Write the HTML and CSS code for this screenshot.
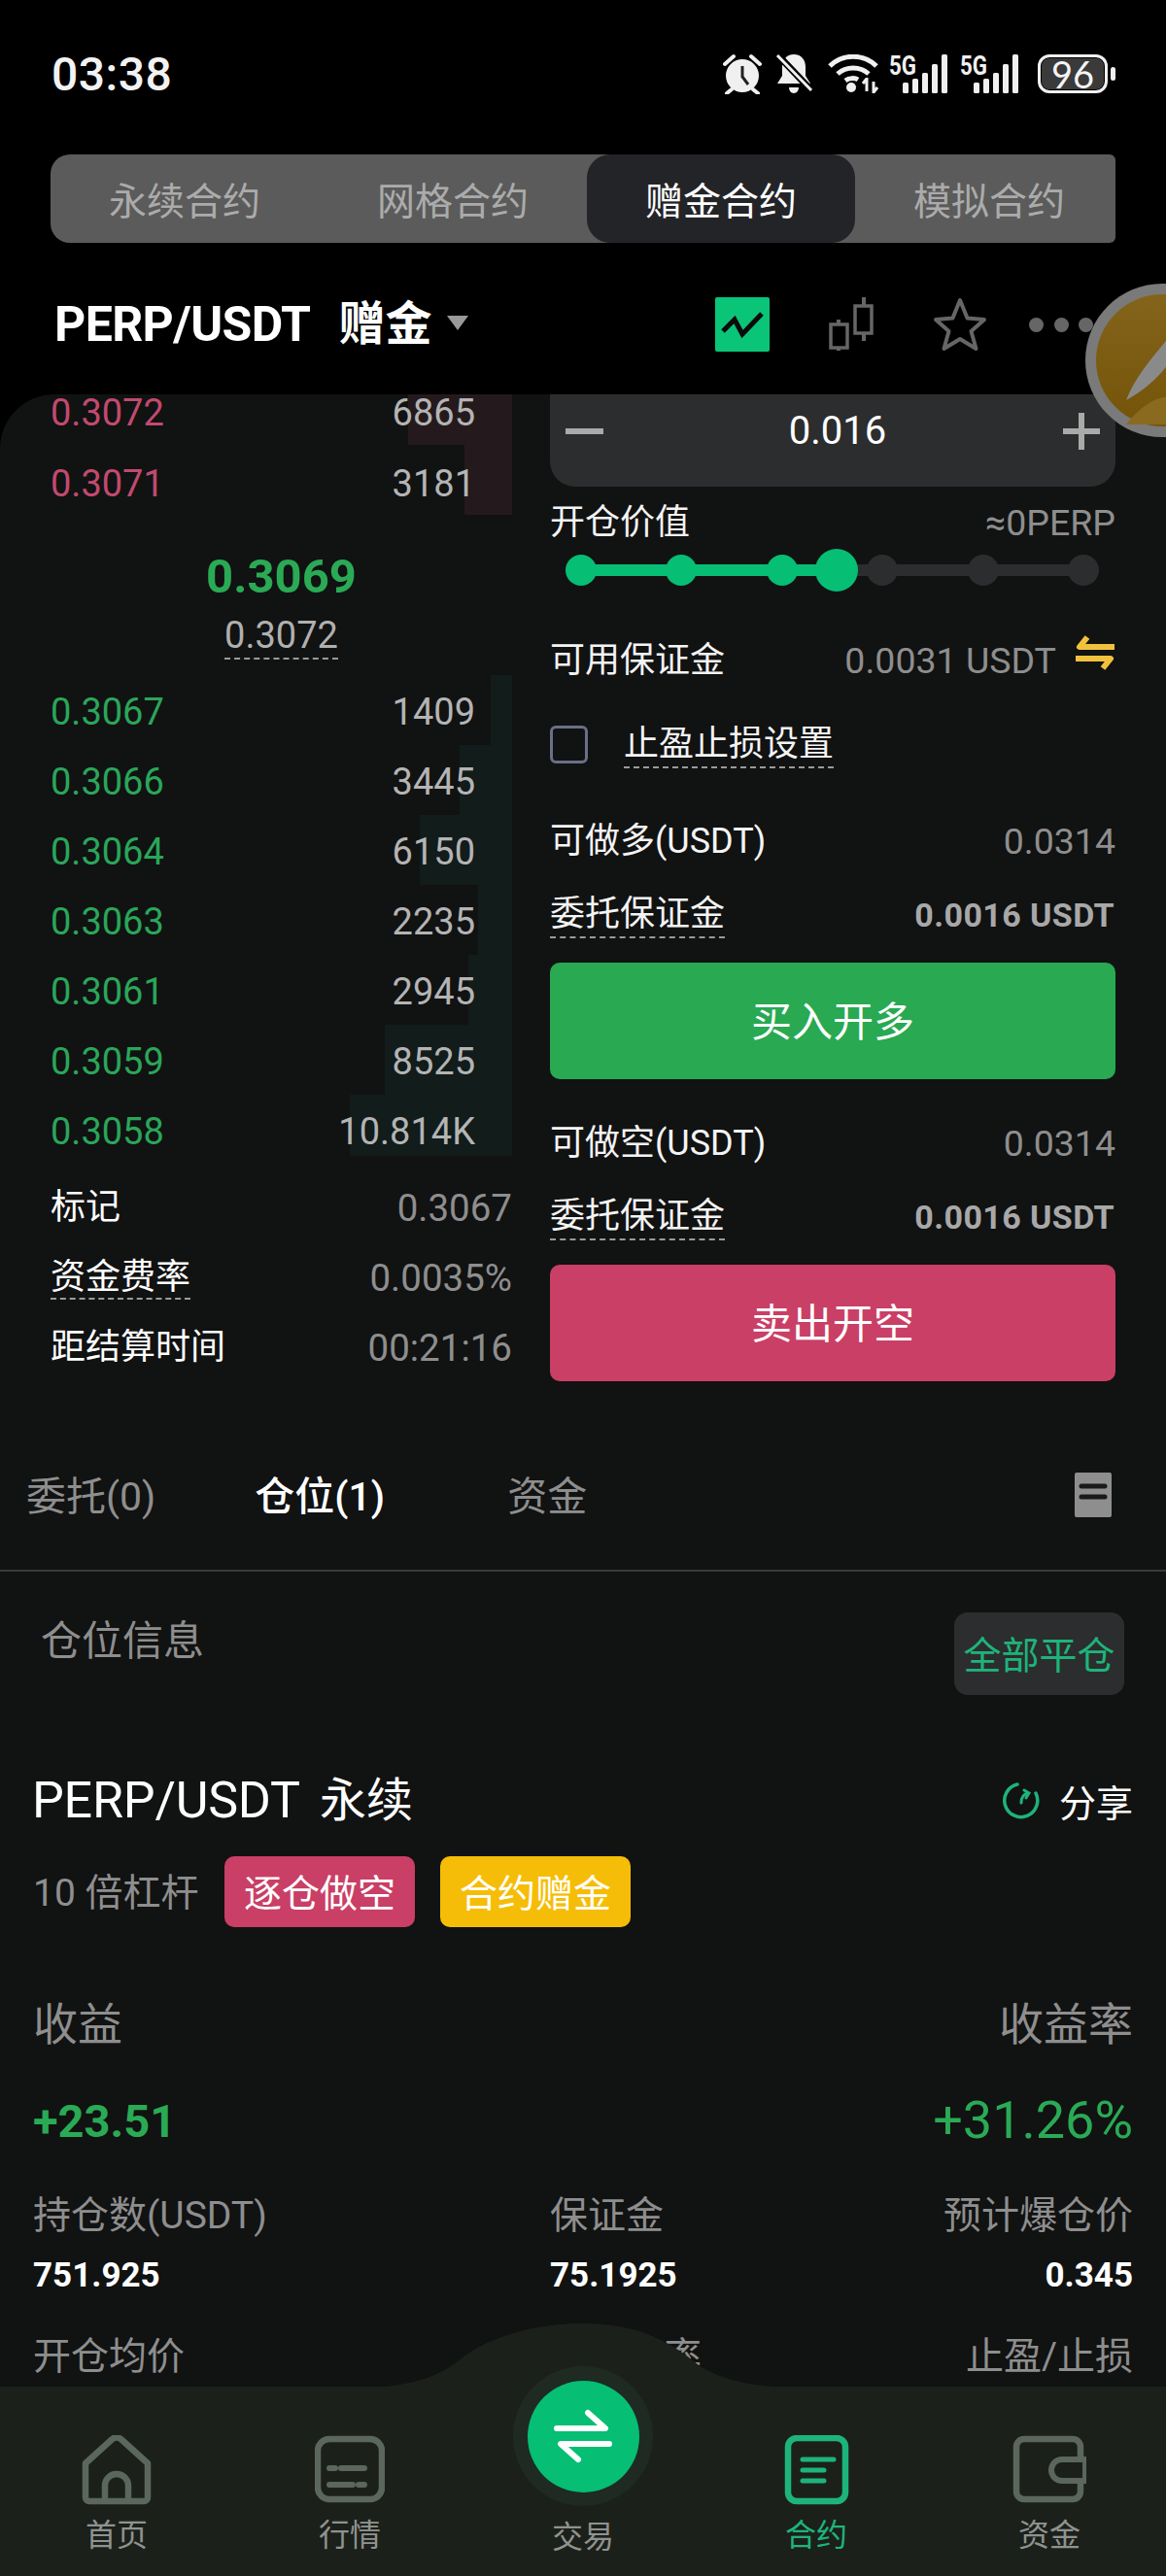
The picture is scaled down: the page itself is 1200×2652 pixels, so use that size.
FILE: index.html
```html
<!DOCTYPE html>
<html lang="zh-CN">
<head>
<meta charset="utf-8">
<title>赠金合约</title>
<link rel="stylesheet" href="styles.css">
</head>
<body>
<div class="page">
  <header class="status">
    <span class="time">03:38</span>
    <div class="status-icons">
      <svg class="ic-alarm" width="40" height="42" viewBox="0 0 40 42"><circle cx="20" cy="23" r="17" fill="#f0f0f0"/><path d="M20 13v11l6 8" fill="none" stroke="#222" stroke-width="3"/><path d="M2 11 11 3M38 11 29 3M9 37l-5 4M31 37l5 4" stroke="#f0f0f0" stroke-width="4" stroke-linecap="round"/></svg>
      <svg class="ic-bell" width="40" height="44" viewBox="0 0 40 44"><path d="M20 2c8 0 12 6 12 13v9l5 8H3l5-8v-9c0-7 4-13 12-13zM15 36h10c0 3-2 6-5 6s-5-3-5-6z" fill="#f0f0f0"/><path d="M2 1l36 38" stroke="#000" stroke-width="7"/><path d="M3 3l35 36" stroke="#f0f0f0" stroke-width="3"/></svg>
      <svg class="ic-wifi" width="52" height="40" viewBox="0 0 52 40"><path d="M2 12C15-1 37-1 50 12M10 20c9-8 23-8 32 0M18 27c4-3 10-3 13-1" fill="none" stroke="#f0f0f0" stroke-width="5"/><circle cx="24" cy="34" r="5" fill="#f0f0f0"/><path d="M40 24v14M47 28v12M36 30l4-5M51 34l-4 5" stroke="#f0f0f0" stroke-width="3" fill="none"/></svg>
      <svg class="ic-sig" width="62" height="54" viewBox="0 -6 62 54"><text class="five-g" x="0" y="22" textLength="28" lengthAdjust="spacingAndGlyphs">5G</text><rect x="14" y="30" width="6" height="11" rx="1.5"/><rect x="24" y="26" width="6" height="15" rx="1.5"/><rect x="34" y="20" width="6" height="21" rx="1.5"/><rect x="44" y="11" width="6" height="30" rx="1.5"/><rect x="54" y="1" width="6" height="40" rx="1.5"/></svg>
      <svg class="ic-sig" width="62" height="54" viewBox="0 -6 62 54"><text class="five-g" x="0" y="22" textLength="28" lengthAdjust="spacingAndGlyphs">5G</text><rect x="14" y="30" width="6" height="11" rx="1.5"/><rect x="24" y="26" width="6" height="15" rx="1.5"/><rect x="34" y="20" width="6" height="21" rx="1.5"/><rect x="44" y="11" width="6" height="30" rx="1.5"/><rect x="54" y="1" width="6" height="40" rx="1.5"/></svg>
      <div class="battery"><span class="batt-body">96</span><i class="batt-nub"></i></div>
    </div>
  </header>

  <nav class="mode-tabs">
    <span class="mode-tab">永续合约</span>
    <span class="mode-tab">网格合约</span>
    <span class="mode-tab active">赠金合约</span>
    <span class="mode-tab">模拟合约</span>
  </nav>

  <div class="symbol-row">
    <h1 class="symbol">PERP/USDT<span class="symbol-tag">赠金</span></h1>
    <i class="caret"></i>
    <div class="symbol-tools">
      <svg class="tool-line" width="56" height="56" viewBox="0 0 56 56"><rect width="56" height="56" rx="2" fill="#0ac578"/><path d="M8 35l12-12 8 15 20-21" fill="none" stroke="#0b0b0b" stroke-width="5"/></svg>
      <svg class="tool-candle" width="46" height="56" viewBox="0 0 46 56"><path d="M10 23v32M36 0v45" stroke="#666" stroke-width="4"/><rect x="2" y="28" width="17" height="24" fill="#000" stroke="#666" stroke-width="3.5"/><rect x="27" y="9" width="17" height="28" fill="#000" stroke="#666" stroke-width="3.5"/></svg>
      <svg class="tool-star" width="56" height="56" viewBox="0 0 56 56"><path d="M28 3l7.5 18.5L53 23 39.5 35l5 18L28 43 11.500 53l5-18L3 23l17.500-1.500z" fill="none" stroke="#666" stroke-width="4" stroke-linejoin="round"/></svg>
      <div class="tool-dots"><i></i><i></i><i></i></div>
    </div>
  </div>

  <main class="sheet">
    <section class="trade">
      <div class="book">
        <div class="asks">
          <div class="level level-top"><i class="depth depth-ask" style="width:107px"></i><span class="px ask">0.3072</span><span class="qty">6865</span></div>
          <div class="level"><i class="depth depth-ask" style="width:49px"></i><span class="px ask">0.3071</span><span class="qty">3181</span></div>
        </div>
        <div class="mid">
          <div class="mid-price">0.3069</div>
          <div class="mid-mark"><span class="dashed">0.3072</span></div>
        </div>
        <div class="bids">
          <div class="level"><i class="depth depth-bid" style="width:22px"></i><span class="px bid">0.3067</span><span class="qty">1409</span></div>
          <div class="level"><i class="depth depth-bid" style="width:54px"></i><span class="px bid">0.3066</span><span class="qty">3445</span></div>
          <div class="level"><i class="depth depth-bid" style="width:95px"></i><span class="px bid">0.3064</span><span class="qty">6150</span></div>
          <div class="level"><i class="depth depth-bid" style="width:35px"></i><span class="px bid">0.3063</span><span class="qty">2235</span></div>
          <div class="level"><i class="depth depth-bid" style="width:45px"></i><span class="px bid">0.3061</span><span class="qty">2945</span></div>
          <div class="level"><i class="depth depth-bid" style="width:131px"></i><span class="px bid">0.3059</span><span class="qty">8525</span></div>
          <div class="level"><i class="depth depth-bid" style="width:167px"></i><span class="px bid">0.3058</span><span class="qty">10.814K</span></div>
        </div>
        <dl class="stats">
          <div class="stat"><dt>标记</dt><dd>0.3067</dd></div>
          <div class="stat"><dt><span class="dashed">资金费率</span></dt><dd>0.0035%</dd></div>
          <div class="stat"><dt>距结算时间</dt><dd>00:21:16</dd></div>
        </dl>
      </div>

      <div class="order">
        <div class="stepper">
          <svg width="40" height="40" viewBox="0 0 40 40"><rect y="17" width="39" height="6" fill="#aaa"/></svg>
          <span class="step-val">0.016</span>
          <svg width="38" height="38" viewBox="0 0 38 38"><path d="M19 0v38M0 19h38" stroke="#aaa" stroke-width="6"/></svg>
        </div>
        <div class="line line-value"><span class="lbl">开仓价值</span><span class="val">≈0PERP</span></div>
        <div class="slider">
          <i class="rail"></i><i class="rail-on"></i>
          <i class="knot on"></i><i class="knot on"></i><i class="knot on"></i><i class="knot"></i><i class="knot"></i><i class="knot"></i>
          <i class="thumb"></i>
        </div>
        <div class="line line-avail">
          <span class="lbl">可用保证金</span>
          <span class="avail-val"><span class="val">0.0031 USDT</span>
            <svg class="swap" width="42" height="36" viewBox="0 0 42 36"><path d="M13 2 5 12h36M29 34l8-10H1" fill="none" stroke="#f0c23c" stroke-width="6" stroke-linejoin="round"/></svg>
          </span>
        </div>
        <div class="line line-check"><i class="check"></i><span class="lbl dashed">止盈止损设置</span></div>
        <div class="line line-long"><span class="lbl">可做多(USDT)</span><span class="val">0.0314</span></div>
        <div class="line line-margin"><span class="lbl dashed">委托保证金</span><span class="val-b">0.0016 USDT</span></div>
        <button class="cta cta-buy">买入开多</button>
        <div class="line line-short"><span class="lbl">可做空(USDT)</span><span class="val">0.0314</span></div>
        <div class="line line-margin"><span class="lbl dashed">委托保证金</span><span class="val-b">0.0016 USDT</span></div>
        <button class="cta cta-sell">卖出开空</button>
      </div>
    </section>

    <nav class="list-tabs">
      <span class="list-tab tab-a">委托(0)</span>
      <span class="list-tab tab-b active">仓位(1)</span>
      <span class="list-tab tab-c">资金</span>
      <svg class="doc" width="38" height="46" viewBox="0 0 38 46"><rect width="38" height="46" rx="2" fill="#8e8e8e"/><path d="M7 14h24M7 25h24" stroke="#1a1a1a" stroke-width="5" stroke-linecap="round"/></svg>
    </nav>

    <section class="position">
      <div class="pos-head">
        <span class="pos-title">仓位信息</span>
        <button class="close-all">全部平仓</button>
      </div>
      <div class="pos-body">
        <div class="pos-name-row">
          <span class="pos-name"><span class="pos-pair">PERP/USDT</span><span class="pos-kind">永续</span></span>
          <span class="share">
            <svg width="42" height="40" viewBox="0 0 42 40"><path d="M17 3a17 17 0 1 0 19 9" fill="none" stroke="#1db47b" stroke-width="3.500" stroke-linecap="round"/><path d="M21 22c0-6 3-9 7-10m-4-3 5 3-3 5" fill="none" stroke="#1db47b" stroke-width="3" stroke-linecap="round"/></svg>
            <span class="share-text">分享</span>
          </span>
        </div>
        <div class="pos-tags">
          <span class="lev">10 倍杠杆</span>
          <span class="tag tag-short">逐仓做空</span>
          <span class="tag tag-gift">合约赠金</span>
        </div>
        <div class="pnl-labels"><span>收益</span><span>收益率</span></div>
        <div class="pnl-values"><span class="pnl">+23.51</span><span class="roe">+31.26%</span></div>
        <div class="metrics">
          <div class="metric"><span class="m-lbl">持仓数(USDT)</span><span class="m-val">751.925</span></div>
          <div class="metric"><span class="m-lbl">保证金</span><span class="m-val">75.1925</span></div>
          <div class="metric m-end"><span class="m-lbl">预计爆仓价</span><span class="m-val">0.345</span></div>
          <div class="metric"><span class="m-lbl">开仓均价</span></div>
          <div class="metric"><span class="m-lbl">保证金率</span></div>
          <div class="metric m-end"><span class="m-lbl">止盈/止损</span></div>
        </div>
      </div>
    </section>
  </main>

  <footer class="dock">
    <svg class="hump" width="460" height="66" viewBox="0 0 460 66"><path d="M0 66C45 66 75 58 100 40 130 14 180 0 230 0c50 0 85 14 119 43 26 17 61 23 111 23z" fill="#1c201b"/></svg>
    <div class="dock-item">
      <svg width="72" height="72" viewBox="0 0 72 72"><path d="M4 29 31 4.500a7 7 0 0 1 10 0L68 29v35a4 4 0 0 1-4 4H8a4 4 0 0 1-4-4z" fill="none" stroke="#5b665c" stroke-width="6.500" stroke-linejoin="round"/><path d="M24 67V52a12 12 0 0 1 24 0v15" fill="none" stroke="#5b665c" stroke-width="6.500"/></svg>
      <span>首页</span>
    </div>
    <div class="dock-item">
      <svg width="72" height="72" viewBox="0 0 72 72"><rect x="3" y="4" width="66" height="62" rx="12" fill="none" stroke="#5b665c" stroke-width="6.500"/><path d="M15 36h6M27 36h24M15 53h24M45 53h6" transform="translate(0 -2)" stroke="#5b665c" stroke-width="6" stroke-linecap="round"/></svg>
      <span>行情</span>
    </div>
    <div class="dock-item dock-trade">
      <div class="trade-halo"><div class="trade-btn">
        <svg width="64" height="56" viewBox="0 0 64 56"><path d="M37 4l18 16H5M27 52 9 36h50" fill="none" stroke="#fff" stroke-width="6" stroke-linecap="round" stroke-linejoin="round"/></svg>
      </div></div>
      <span>交易</span>
    </div>
    <div class="dock-item active">
      <svg width="72" height="72" viewBox="0 0 72 72"><rect x="7" y="3" width="59" height="65" rx="9" fill="none" stroke="#1db47b" stroke-width="6.500"/><path d="M22 25h32M22 36h22M22 47h22" stroke="#1db47b" stroke-width="5" stroke-linecap="round"/></svg>
      <span>合约</span>
    </div>
    <div class="dock-item">
      <svg width="76" height="72" viewBox="0 0 76 72"><path d="M70 24V12a8 8 0 0 0-8-8H12a8 8 0 0 0-8 8v46a8 8 0 0 0 8 8h50a8 8 0 0 0 8-8V48" fill="none" stroke="#5b665c" stroke-width="6.500"/><path d="M75 25H51a11 11 0 0 0 0 22h24z" fill="none" stroke="#5b665c" stroke-width="6"/></svg>
      <span>资金</span>
    </div>
  </footer>

  <div class="float-ball">
    <svg width="158" height="158" viewBox="0 0 158 158">
      <defs><linearGradient id="gold" x1="0" y1="0" x2="0" y2="1"><stop offset="0" stop-color="#84641a"/><stop offset="1" stop-color="#735409"/></linearGradient></defs>
      <circle cx="79" cy="79" r="79" fill="#7a7a7a"/>
      <circle cx="79" cy="79" r="68" fill="url(#gold)"/>
      <path d="M42 120c10-26 30-48 52-74l10 8c-16 28-32 50-62 66z" fill="#8a8a8a"/>
      <path d="M42 145c20-26 42-36 70-24l-18 24z" fill="#8a6a1e"/>
    </svg>
  </div>
</div>
</body>
</html>
```
FILE: styles.css
```css
* { box-sizing: border-box; }
html, body { margin: 0; padding: 0; background: #000; }
body { font-family: Roboto, "Noto Sans CJK SC", sans-serif; color: #fff; }
.page { position: relative; width: 1200px; height: 2652px; overflow: hidden; background: #000; }

/* status bar */
.status { height: 152px; padding: 0 52px 0 53px; display: flex; align-items: center; justify-content: space-between; }
.time { font-size: 48px; font-weight: 500; color: #f2f2f2; letter-spacing: .5px; }
.status-icons { display: flex; align-items: center; }
.ic-bell { margin-left: 13px; }
.ic-wifi { margin-left: 15px; }
.ic-sig { margin-left: 11px; fill: #f0f0f0; }
.five-g { font-family: Roboto, sans-serif; font-size: 28px; font-weight: 700; fill: #f0f0f0; }
.battery { display: flex; align-items: center; margin-left: 18px; }
.batt-body { width: 72px; height: 40px; border: 3px solid #f0f0f0; border-radius: 12px; background: #3a3a3a; box-shadow: inset 0 0 0 1px #000; display: flex; align-items: center; justify-content: center; font-family: Lato, sans-serif; font-size: 38px; line-height: 1; color: #f4f4f4; }
.batt-nub { width: 5px; height: 14px; margin-left: 3px; background: #f0f0f0; border-radius: 3px; }

/* mode tabs */
.mode-tabs { margin: 7px 52px 0; height: 91px; background: #5b5b5b; border-radius: 20px 6px 6px 20px; display: flex; overflow: hidden; }
.mode-tab { flex: 0 0 276px; display: flex; align-items: center; justify-content: center; font-size: 39px; color: #ababab; padding-bottom: 1px; }
.mode-tab.active { background: #232428; color: #fff; border-radius: 24px; }

/* symbol row */
.symbol-row { height: 156px; padding: 12px 75px 0 56px; display: flex; align-items: center; }
.symbol { margin: 0; font-size: 50px; line-height: 60px; font-weight: 700; display: flex; align-items: center; letter-spacing: -.6px; }
.symbol-tag { margin-left: 29px; letter-spacing: 0; font-size: 48px; }
.caret { margin: -4px 0 0 16px; width: 0; height: 0; border-left: 11px solid transparent; border-right: 11px solid transparent; border-top: 15px solid #999; }
.symbol-tools { margin-left: auto; display: flex; align-items: center; }
.tool-candle { margin-left: 61px; }
.tool-star { margin-left: 61px; }
.tool-dots { margin-left: 43px; display: flex; gap: 10.500px; }
.tool-dots i { width: 15px; height: 15px; border-radius: 50%; background: #666; }

/* sheet */
.sheet { background: #111212; border-top-left-radius: 56px; height: 2246px; }
.trade { display: flex; }
.book { flex: 0 0 566px; padding: 0 39px 0 52px; }

.asks { height: 124px; display: flex; flex-direction: column; }
.level { position: relative; flex: none; height: 72px; display: flex; align-items: center; justify-content: space-between; padding: 4px 38px 0 0; font-size: 38px; line-height: 1; }
.asks .level { padding-top: 7px; }
.asks .level-top { height: 52px; padding-top: 0; padding-bottom: 14px; }
.depth { position: absolute; top: 0; right: 0; bottom: 0; }
.depth-ask { background: #241a1d; }
.depth-bid { background: #111c1b; }
.px, .qty { position: relative; }
.ask { color: #c24a6e; }
.bid { color: #2aa65a; }
.qty { color: #b4b4b4; }

.mid { height: 165px; text-align: center; padding-left: 0; }
.mid-price { padding-top: 34px; height: 91px; font-size: 49px; line-height: 60px; font-weight: 700; color: #2aaa55; }
.mid-mark { margin-top: 9px; font-size: 38px; line-height: 48px; color: #b0b0b0; }
.dashed { border-bottom: 2px dashed #9a9a9a; }
.mid-mark .dashed { display: inline-block; line-height: 46px; }

.bids { height: 495px; overflow: hidden; }
.stats { margin: 17px 0 0; }
.stat { height: 72px; display: flex; align-items: center; justify-content: space-between; }
.stat dt { font-size: 36px; line-height: 48px; }
.stat dd { margin: 0; font-size: 38.500px; color: #8e8e8e; }

/* order column */
.order { flex: 0 0 582px; }
.stepper { height: 95px; padding: 0 16px 20px 16px; background: #2c2d2e; border-radius: 0 0 26px 26px; display: flex; align-items: center; justify-content: space-between; }
.step-val { font-size: 40px; margin-left: 8px; }
.line { height: 50px; padding-top: 3px; display: flex; align-items: center; justify-content: space-between; font-size: 36px; }
.lbl { line-height: 46px; color: #f4f4f4; }
.val { color: #8e8e8e; font-size: 37.500px; }
.val-b { color: #a8a8a8; font-weight: 700; font-size: 34px; letter-spacing: .4px; margin-right: 1px; }
.line-value { margin-top: 10px; }
.slider { position: relative; height: 44px; margin: 4px 17px 0 16px; display: flex; align-items: center; justify-content: space-between; }
.rail { position: absolute; left: 10px; right: 10px; top: 16px; height: 12px; background: #2c2d2e; }
.rail-on { position: absolute; left: 10px; top: 16px; width: 270px; height: 12px; background: #06be74; }
.knot { position: relative; width: 32px; height: 32px; border-radius: 50%; background: #2c2d2e; }
.knot.on { background: #06be74; }
.thumb { position: absolute; left: 257px; top: 0; width: 44px; height: 44px; border-radius: 50%; background: #06be74; }
.line-avail { margin-top: 44px; }
.avail-val { display: flex; align-items: center; }
.swap { margin: -15px 0 0 19px; }
.line-check { margin-top: 37px; justify-content: flex-start; }
.check { width: 39px; height: 39px; border: 3px solid #6a6f88; border-radius: 6px; margin-right: 37px; }
.line-long { margin-top: 49px; }
.line-margin { margin-top: 26px; }
.cta { display: block; width: 100%; height: 120px; margin-top: 26px; padding: 0 0 6px; border: 0; border-radius: 10px; color: #fff; font: 400 42px Roboto, "Noto Sans CJK SC", sans-serif; }
.cta-buy { background: #28a952; }
.cta-sell { background: #c93f66; }
.line-short { margin-top: 39px; }

/* list tabs */
.list-tabs { position: relative; margin-top: 67px; height: 128px; padding-bottom: 28px; border-bottom: 2px solid #3a3a3a; display: flex; align-items: center; font-size: 41px; color: #8e8e8e; }
.list-tab { position: relative; line-height: 60px; padding-top: 3px; }
.tab-a { margin-left: 27px; }
.tab-b { margin-left: 102px; }
.tab-c { margin-left: 126px; }
.list-tab.active { color: #fff; font-weight: 500; }
.doc { margin-left: auto; margin-right: 56px; }

/* position */
.pos-head { padding: 42px 43px 0 42px; display: flex; justify-content: space-between; align-items: flex-start; }
.pos-title { font-size: 42px; line-height: 60px; color: #8e8e8e; }
.close-all { width: 175px; height: 85px; border: 0; border-radius: 14px; background: #2c2d2e; color: #1db47b; font: 400 39px Roboto, "Noto Sans CJK SC", sans-serif; padding: 0 0 4px; }
.pos-body { padding: 0 34px; }
.pos-name-row { margin-top: 79px; height: 60px; display: flex; align-items: center; justify-content: space-between; }
.pos-name { line-height: 60px; display: flex; align-items: center; margin-left: -1px; }
.pos-pair { font-size: 52px; letter-spacing: -.2px; }
.pos-kind { font-size: 48px; margin-left: 20px; }
.share { display: flex; align-items: center; gap: 18px; font-size: 38px; }
.share-text { padding-bottom: 2px; }
.pos-tags { margin-top: 27px; height: 73px; display: flex; align-items: center; }
.lev { font-size: 39px; color: #8e8e8e; width: 197px; padding-bottom: 6px; }
.tag { width: 196px; height: 73px; padding-bottom: 3px; display: flex; align-items: center; justify-content: center; border-radius: 10px; font-size: 39px; }
.tag-short { background: #c93f66; }
.tag-gift { background: #f5bd07; margin-left: 26px; }
.pnl-labels { margin-top: 66px; height: 60px; display: flex; align-items: center; justify-content: space-between; font-size: 46px; color: #8e8e8e; }
.pnl-values { margin-top: 43px; height: 60px; display: flex; align-items: center; justify-content: space-between; color: #2aaa55; }
.pnl { font-size: 47px; font-weight: 700; }
.roe { font-size: 54px; margin-top: -2px; }
.metrics { margin-top: 43px; display: grid; grid-template-columns: 532px 1fr 1fr; row-gap: 36px; }
.metric { display: flex; flex-direction: column; }
.m-end { align-items: flex-end; }
.m-lbl { height: 50px; line-height: 50px; font-size: 39px; color: #8e8e8e; }
.m-val { margin-top: 15px; height: 44px; line-height: 44px; font-size: 35px; font-weight: 700; color: #fff; }

/* dock */
.dock { position: absolute; left: 0; right: 0; bottom: 0; height: 195px; background: #1c201b; display: flex; }
.hump { position: absolute; left: 370px; top: -65px; }
.dock-item { position: relative; flex: 1 1 0; display: flex; flex-direction: column; align-items: center; padding-top: 50px; color: #8f938f; font-size: 32px; }
.dock-item svg { display: block; }
.dock-item span { display: block; margin-top: 9px; line-height: 44px; }
.dock-trade { justify-content: flex-start; padding-top: 124px; }
.dock-item.active { color: #1db47b; }
.trade-halo { position: absolute; left: 48px; top: -21px; width: 144px; height: 144px; border-radius: 50%; background: #1f2a22; display: flex; align-items: center; justify-content: center; }
.trade-btn { width: 115px; height: 115px; border-radius: 50%; background: #06be74; display: flex; align-items: center; justify-content: center; }

/* floating assistive ball */
.float-ball { position: absolute; left: 1117px; top: 292px; width: 158px; height: 158px; }
```
